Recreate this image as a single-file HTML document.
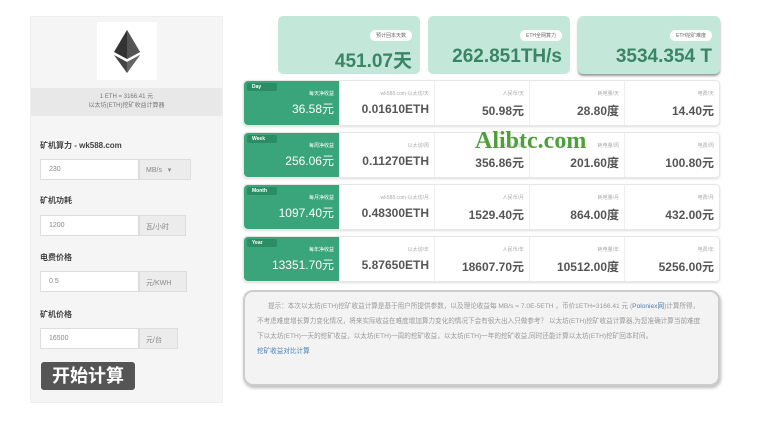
<!DOCTYPE html>
<html><head><meta charset="utf-8"><style>
*{margin:0;padding:0;box-sizing:border-box}
body{width:758px;height:426px;background:#fff;font-family:"Liberation Sans","Noto Sans CJK SC",sans-serif;position:relative;overflow:hidden;color:#333}
.abs{position:absolute}
.left{left:30px;top:16px;width:193px;height:387px;background:#f5f5f5;border:1px solid #eee}
.logo{left:97px;top:22px;width:60px;height:58px;background:#fff}
.band{left:31px;top:88px;width:191px;height:28px;background:#e8e8e8;font-size:6px;color:#777;text-align:center;line-height:9px;padding-top:5px}
.lbl{left:40px;font-size:8px;font-weight:bold;color:#444}
.inp{left:40px;width:99px;height:21px;background:#fff;border:1px solid #ddd;font-size:7px;color:#888;padding:6px 8px}
.unit{left:139px;height:21px;background:#ececec;border:1px solid #ddd;font-size:7px;color:#888;padding:6px 6px}
.btn{left:41px;top:362px;width:94px;height:28px;background:#555;color:#fff;font-size:18px;font-weight:bold;text-align:center;line-height:28px;border-radius:3px}
.card{top:16px;width:142px;height:58px;background:#c3e8d9;border-radius:5px;text-align:right;padding:8px 8px 0 0}
.card .tag{display:inline-block;background:#fff;border-radius:6px;font-size:5px;color:#666;padding:2px 6px}
.card .v{font-size:19px;font-weight:bold;color:#3a8565;margin-top:4px}
.row{left:243px;width:477px;height:46px;border:1px solid #e6e6e6;border-radius:4px;background:#fff;display:flex;box-shadow:0 1px 2px #ddd}
.g{width:95px;background:#3aa57a;color:#fff;text-align:right;padding:5px 5px 0 0;position:relative;border-radius:4px 0 0 4px}
.g .t{position:absolute;left:3px;top:2px;background:#2c8c63;font-size:5px;padding:1px 5px;width:30px;text-align:left;border-radius:2px;font-weight:bold}
.g .s{font-size:5px;margin-top:4px}
.g .n{font-size:12px;margin-top:3px}
.c{flex:1;border-left:1px solid #eee;text-align:right;padding:9px 5px 0 0}
.c .s{font-size:5px;color:#aaa}
.c .n{font-size:12px;color:#555;font-weight:bold;margin-top:5px}
.tip{left:243px;top:290px;width:477px;height:96px;background:#f3f3f3;border:2px solid #ccc;border-radius:10px;box-shadow:1px 2px 3px #bbb;font-size:6.6px;color:#999;line-height:15px;padding:7px 16px 0 12px}
.wm{left:475px;top:128px;font-family:"Liberation Serif",serif;font-size:24px;color:#4fa03a;font-weight:bold}
</style></head><body>
<div class="abs left"></div>
<div class="abs logo"><svg width="60" height="58" viewBox="0 0 60 58"><polygon points="30,8 17,30 30,37 43,30" fill="#333"/><polygon points="30,8 30,37 43,30" fill="#555"/><polygon points="17,33 30,51 43,33 30,40" fill="#444"/><polygon points="30,40 30,51 43,33" fill="#666"/></svg></div>
<div class="abs band">1 ETH = 3166.41 元<br>以太坊(ETH)挖矿收益计算器</div>
<div class="abs lbl" style="top:140px">矿机算力 - wk588.com</div>
<div class="abs inp" style="top:159px">230</div><div class="abs unit" style="top:159px;width:52px">MB/s &nbsp; ▾</div>
<div class="abs lbl" style="top:195px">矿机功耗</div>
<div class="abs inp" style="top:215px">1200</div><div class="abs unit" style="top:215px;width:47px">瓦/小时</div>
<div class="abs lbl" style="top:252px">电费价格</div>
<div class="abs inp" style="top:271px">0.5</div><div class="abs unit" style="top:271px;width:48px">元/KWH</div>
<div class="abs lbl" style="top:309px">矿机价格</div>
<div class="abs inp" style="top:328px">16500</div><div class="abs unit" style="top:328px;width:39px">元/台</div>
<div class="abs btn">开始计算</div>

<div class="abs card" style="left:278px"><span class="tag">预计回本天数</span><div class="v">451.07天</div></div>
<div class="abs card" style="left:428px"><span class="tag">ETH全网算力</span><div class="v">262.851TH/s</div></div>
<div class="abs card" style="left:578px;box-shadow:0 2px 2px #999"><span class="tag">ETH挖矿难度</span><div class="v">3534.354 T</div></div>

<div class="abs row" style="top:80px"><div class="g"><div class="t">Day</div><div class="s">每天净收益</div><div class="n">36.58元</div></div>
<div class="c"><div class="s">wk588.com-以太坊/天</div><div class="n">0.01610ETH</div></div><div class="c"><div class="s">人民币/天</div><div class="n">50.98元</div></div><div class="c"><div class="s">耗电量/天</div><div class="n">28.80度</div></div><div class="c"><div class="s">电费/天</div><div class="n">14.40元</div></div></div>
<div class="abs row" style="top:132px"><div class="g"><div class="t">Week</div><div class="s">每周净收益</div><div class="n">256.06元</div></div>
<div class="c"><div class="s">以太坊/周</div><div class="n">0.11270ETH</div></div><div class="c"><div class="s">人民币/周</div><div class="n">356.86元</div></div><div class="c"><div class="s">耗电量/周</div><div class="n">201.60度</div></div><div class="c"><div class="s">电费/周</div><div class="n">100.80元</div></div></div>
<div class="abs row" style="top:184px"><div class="g"><div class="t">Month</div><div class="s">每月净收益</div><div class="n">1097.40元</div></div>
<div class="c"><div class="s">wk588.com-以太坊/月</div><div class="n">0.48300ETH</div></div><div class="c"><div class="s">人民币/月</div><div class="n">1529.40元</div></div><div class="c"><div class="s">耗电量/月</div><div class="n">864.00度</div></div><div class="c"><div class="s">电费/月</div><div class="n">432.00元</div></div></div>
<div class="abs row" style="top:236px"><div class="g"><div class="t">Year</div><div class="s">每年净收益</div><div class="n">13351.70元</div></div>
<div class="c"><div class="s">以太坊/年</div><div class="n">5.87650ETH</div></div><div class="c"><div class="s">人民币/年</div><div class="n">18607.70元</div></div><div class="c"><div class="s">耗电量/年</div><div class="n">10512.00度</div></div><div class="c"><div class="s">电费/年</div><div class="n">5256.00元</div></div></div>
<div class="abs wm">Alibtc.com</div>
<div class="abs tip">&nbsp;&nbsp;&nbsp;&nbsp;&nbsp;&nbsp;提示：本次以太坊(ETH)挖矿收益计算是基于用户所提供参数，以及理论收益每 MB/s = 7.0E-5ETH ，币价1ETH=3166.41 元 (<span style="color:#4a7fb0">Poloniex网</span>)计算所得，不考虑难度增长算力变化情况，将来实际收益在难度增加算力变化的情况下会有很大出入只做参考？ 以太坊(ETH)挖矿收益计算器,为您准确计算当前难度下以太坊(ETH)一天的挖矿收益，以太坊(ETH)一周的挖矿收益，以太坊(ETH)一年的挖矿收益,同时还能计算以太坊(ETH)挖矿回本时间。<br><span style="color:#4a7fb0">挖矿收益对比计算</span></div>
</body></html>
